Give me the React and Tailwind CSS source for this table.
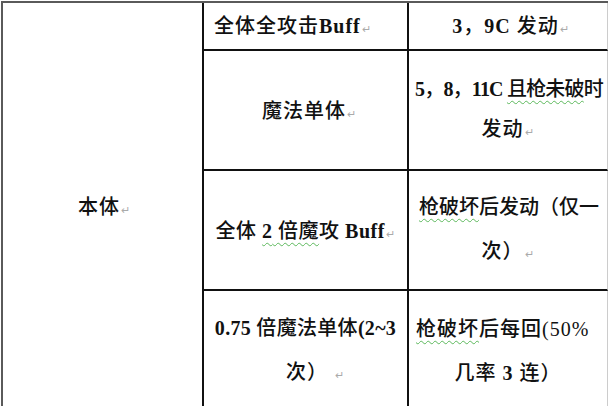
export default function App() {
  const ret = <span className="text-[11px] text-[#aaa] font-normal ml-[1px]">↵</span>;
  const wavy = "underline decoration-wavy decoration-[#5cb85c] decoration-1 underline-offset-[4px]";
  const L = "font-bold";
  return (
    <div className="w-[612px] h-[406px] overflow-hidden bg-white" style={{ fontFamily: '"Liberation Serif", "Noto Sans CJK SC", serif' }}>
      <div className="ml-px mt-px w-[607px] grid grid-cols-[201px_205px_199px] grid-rows-[48px_120px_120px_120px] border-l-2 border-t-2 border-[#5a5a5a] text-[20px] text-[#111] font-medium tracking-[1px]">
        <div className="row-span-4 border-r-2 border-[#111] flex items-center justify-center">
          <span className="ml-[4px]">本体{ret}</span>
        </div>
        <div className="border-r-2 border-b-2 border-[#111] flex items-center pl-[10px]">
          <span>全体全攻击<span className={L}>Buff</span>{ret}</span>
        </div>
        <div className="border-r border-b-2 border-r-[#ccc] border-b-[#111] flex items-center justify-center">
          <span className="ml-[6px]"><span className={L}>3</span>，<span className={L}>9C</span> 发动{ret}</span>
        </div>

        <div className="border-r-2 border-b-2 border-[#111] flex items-center justify-center">
          <span className="mt-[1px] ml-[8px]">魔法单体{ret}</span>
        </div>
        <div className="border-r border-b-2 border-r-[#ccc] border-b-[#111] flex flex-col items-center justify-center leading-[40px]">
          <span className="whitespace-nowrap tracking-[-0.8px] ml-[2px]"><span className={L}>5</span>，<span className={L}>8</span>，<span className={L}>11C</span> <span className={wavy}>且枪未破</span>时</span>
          <span>发动{ret}</span>
        </div>

        <div className="border-r-2 border-b-2 border-[#111] flex items-center justify-center">
          <span className="whitespace-nowrap mt-[2px] tracking-[0.5px]">全体 <span className={wavy}><span className={L}>2</span> 倍魔</span>攻 <span className={L}>Buff</span>{ret}</span>
        </div>
        <div className="border-r border-b-2 border-r-[#ccc] border-b-[#111] flex flex-col items-center justify-center leading-[44px]">
          <span className="whitespace-nowrap tracking-[0px] ml-[2px]"><span className={wavy}>枪破坏</span>后发动（仅一</span>
          <span>次）{ret}</span>
        </div>

        <div className="border-r-2 border-[#111] flex flex-col items-center justify-center leading-[44px]">
          <span className="whitespace-nowrap tracking-[0.3px]"><span className={L}>0.75</span> 倍魔法单体<span className={L}>(2~3</span></span>
          <span className="ml-[20px]">次） {ret}</span>
        </div>
        <div className="border-r border-r-[#ccc] flex flex-col items-center justify-center leading-[44px]">
          <span className="whitespace-nowrap self-start ml-[7px]"><span className={wavy}>枪破坏</span>后每回<span className="font-normal">(50%</span></span>
          <span>几率 <span className={L}>3</span> 连）</span>
        </div>
      </div>
    </div>
  );
}
